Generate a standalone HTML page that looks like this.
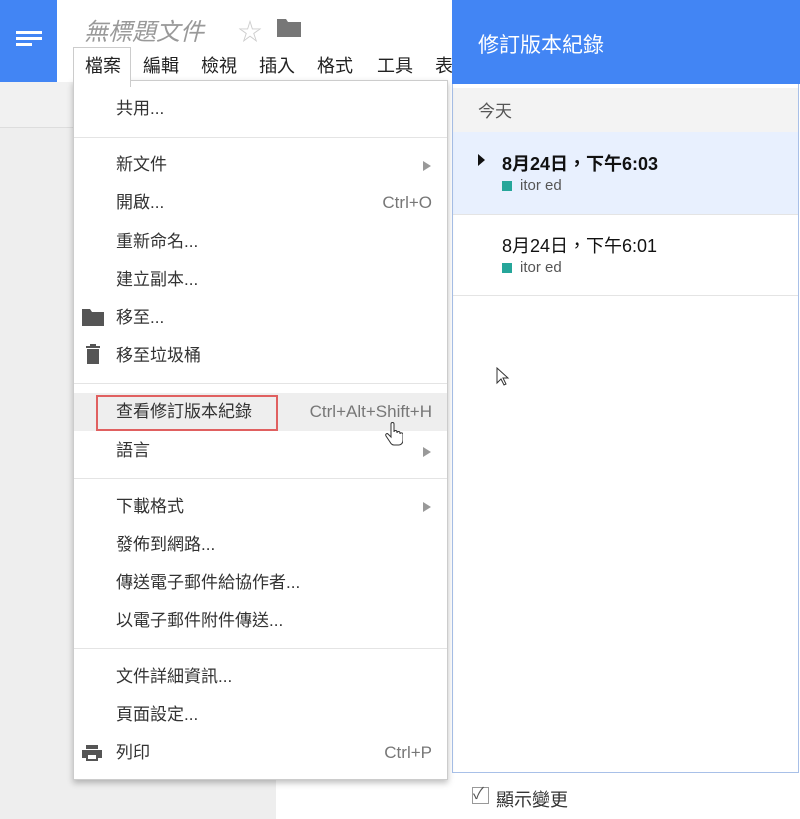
<!DOCTYPE html>
<html><head><meta charset="utf-8"><style>
*{margin:0;padding:0;box-sizing:border-box}
body{width:800px;height:819px;position:relative;overflow:hidden;background:#fff;font-family:"Liberation Sans","Noto Sans CJK TC",sans-serif;color:#222}
.a{position:absolute}
.mi{position:absolute;left:42px;font-size:17px;color:#333;line-height:20px}
.sc{position:absolute;right:15px;font-size:17px;color:#777;line-height:20px}
.ar{position:absolute;right:16px;width:0;height:0;border-left:8px solid #999;border-top:5px solid transparent;border-bottom:5px solid transparent}
.sep{position:absolute;left:0;right:0;height:1px;background:#e4e4e4}
.mb{position:absolute;top:52px;font-size:18px;color:#222}
</style></head><body>
<div class="a" style="left:0;top:0;width:57px;height:82px;background:#4285f4"></div>
<div class="a" style="left:16px;top:31px;width:26px;height:3px;background:#fff;box-shadow:0 6px 0 #fff,0 12px 0 #fff"></div>
<div class="a" style="left:32px;top:43px;width:10px;height:3px;background:#4285f4"></div>
<div class="a" style="left:0;top:82px;width:73px;height:46px;background:#f1f1f1;border-bottom:1px solid #ddd"></div>
<div class="a" style="left:0;top:128px;width:276px;height:691px;background:#eee"></div>
<div class="a" style="left:84px;top:12px;font-size:24px;font-style:italic;color:#999">無標題文件</div>
<div class="a" style="left:238px;top:12px;font-size:24px;color:#ccc">☆</div>
<svg class="a" style="left:277px;top:17px" width="24" height="20"><path d="M0 2h9l2 3h13v15H0z" fill="#777"/></svg>
<div class="a" style="left:73px;top:47px;width:58px;height:40px;border:1px solid #ccc;border-bottom:none;background:#fff;z-index:3"></div>
<div class="a" style="left:85px;top:52px;font-size:18px;color:#222;z-index:4">檔案</div>
<div class="mb" style="left:143px">編輯</div>
<div class="mb" style="left:201px">檢視</div>
<div class="mb" style="left:259px">插入</div>
<div class="mb" style="left:317px">格式</div>
<div class="mb" style="left:377px">工具</div>
<div class="mb" style="left:435px">表</div>
<!-- menu -->
<div class="a" style="left:73px;top:80px;width:375px;height:700px;background:#fff;border:1px solid #ccc;box-shadow:0 3px 6px rgba(0,0,0,.25);z-index:2">
<div class="mi" style="top:18px">共用...</div>
<div class="sep" style="top:56px"></div>
<div class="mi" style="top:74px">新文件</div><div class="ar" style="top:80px"></div>
<div class="mi" style="top:112px">開啟...</div><div class="sc" style="top:112px">Ctrl+O</div>
<div class="mi" style="top:151px">重新命名...</div>
<div class="mi" style="top:189px">建立副本...</div>
<svg class="a" style="left:8px;top:227px" width="22" height="18"><path d="M0 1h8l2 3h12v14H0z" fill="#555"/></svg>
<div class="mi" style="top:227px">移至...</div>
<svg class="a" style="left:11px;top:263px" width="16" height="20"><path d="M1 2h14v2H1zM5 0h6v2H5zM2 5h12v15H2z" fill="#555"/></svg>
<div class="mi" style="top:265px">移至垃圾桶</div>
<div class="sep" style="top:302px"></div>
<div class="a" style="left:0;top:312px;width:373px;height:38px;background:#eee"></div>
<div class="a" style="left:22px;top:314px;width:182px;height:36px;border:2px solid #e06060"></div>
<div class="mi" style="top:321px">查看修訂版本紀錄</div><div class="sc" style="top:321px">Ctrl+Alt+Shift+H</div>
<div class="mi" style="top:360px">語言</div><div class="ar" style="top:366px"></div>
<div class="sep" style="top:397px"></div>
<div class="mi" style="top:416px">下載格式</div><div class="ar" style="top:421px"></div>
<div class="mi" style="top:454px">發佈到網路...</div>
<div class="mi" style="top:492px">傳送電子郵件給協作者...</div>
<div class="mi" style="top:530px">以電子郵件附件傳送...</div>
<div class="sep" style="top:567px"></div>
<div class="mi" style="top:586px">文件詳細資訊...</div>
<div class="mi" style="top:624px">頁面設定...</div>
<svg class="a" style="left:8px;top:664px" width="20" height="16"><path d="M4 0h12v4H4zM0 5h20v8h-4v3H4v-3H0z" fill="#555"/><rect x="6" y="10" width="8" height="4" fill="#fff"/></svg>
<div class="mi" style="top:662px">列印</div><div class="sc" style="top:662px">Ctrl+P</div>
</div>
<svg class="a" style="left:385px;top:422px;z-index:5" width="18" height="24"><path d="M6 2c0-2 3-2 3 0v8c0-2 3-2 3 0v1c0-2 3-2 3 0v1c0-2 3-1 3 0v6c0 3-2 5-4 5h-5c-2 0-3-1-4-3L1 14c-1-2 1-3 2-2l3 3z" fill="#fff" stroke="#333" stroke-width="1"/></svg>
<!-- right panel -->
<div class="a" style="left:452px;top:0;width:348px;height:84px;background:#4285f4"></div>
<div class="a" style="left:478px;top:29px;font-size:21px;color:#fff">修訂版本紀錄</div>
<div class="a" style="left:452px;top:84px;width:347px;height:689px;border:1px solid #a8c0e8;border-top:none;background:#fff"></div>
<div class="a" style="left:453px;top:88px;width:345px;height:44px;background:#f3f3f3"></div>
<div class="a" style="left:478px;top:97px;font-size:17px;color:#555">今天</div>
<div class="a" style="left:453px;top:132px;width:345px;height:82px;background:#e8f0fe"></div>
<div class="a" style="left:478px;top:154px;width:0;height:0;border-left:7px solid #111;border-top:6px solid transparent;border-bottom:6px solid transparent"></div>
<div class="a" style="left:502px;top:150px;font-size:18px;font-weight:bold;color:#111">8月24日，下午6:03</div>
<div class="a" style="left:502px;top:181px;width:10px;height:10px;background:#26a69a"></div>
<div class="a" style="left:520px;top:177px;font-size:15px;color:#555">itor ed</div>
<div class="a" style="left:453px;top:214px;width:345px;height:1px;background:#e4e4e4"></div>
<div class="a" style="left:502px;top:232px;font-size:18px;color:#111">8月24日，下午6:01</div>
<div class="a" style="left:502px;top:263px;width:10px;height:10px;background:#26a69a"></div>
<div class="a" style="left:520px;top:259px;font-size:15px;color:#555">itor ed</div>
<div class="a" style="left:453px;top:295px;width:345px;height:1px;background:#e4e4e4"></div>
<svg class="a" style="left:496px;top:367px" width="14" height="20"><path d="M1 1v15l4-4 3 6 2-1-3-6h5z" fill="#fff" stroke="#333"/></svg>
<div class="a" style="left:472px;top:787px;width:17px;height:17px;border:1px solid #999;font-size:16px;line-height:14px;color:#555">✓</div>
<div class="a" style="left:496px;top:786px;font-size:18px;color:#333">顯示變更</div>
</body></html>
